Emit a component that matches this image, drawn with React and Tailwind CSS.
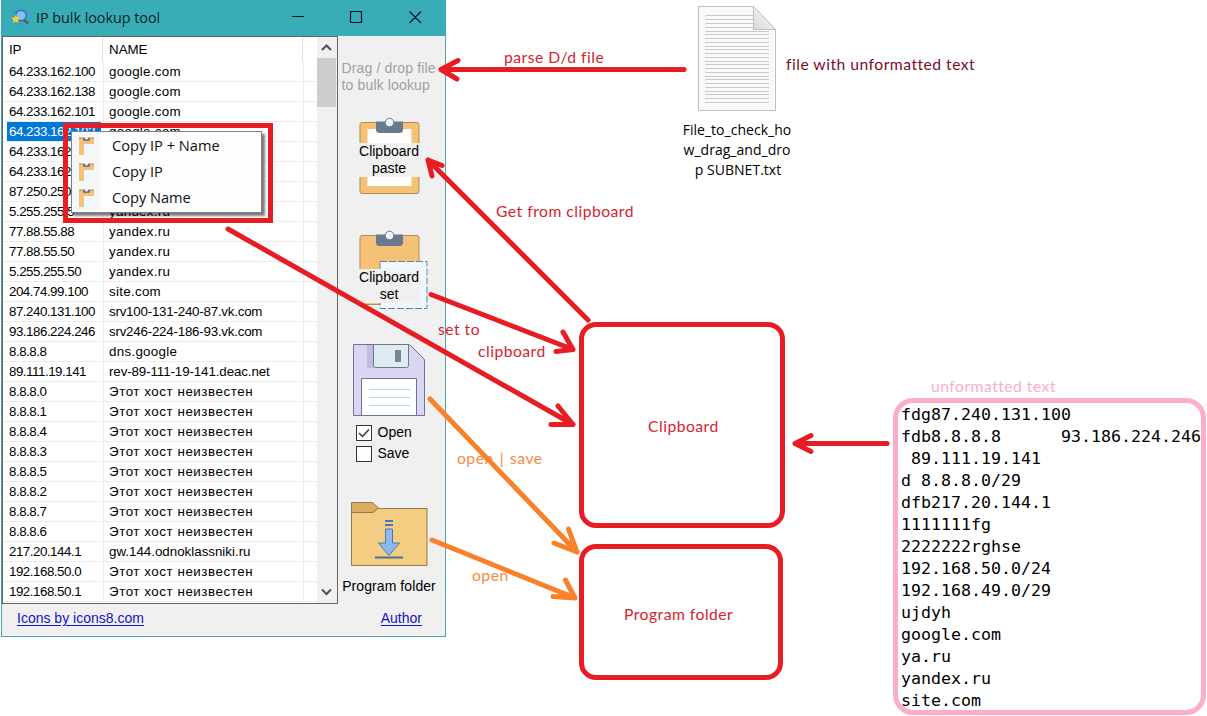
const rows = [
  ["64.233.162.100", "google.com"],
  ["64.233.162.138", "google.com"],
  ["64.233.162.101", "google.com"],
  ["64.233.162.102", "google.com"],
  ["64.233.162.139", "google.com"],
  ["64.233.162.113", "google.com"],
  ["87.250.250.242", "ya.ru"],
  ["5.255.255.5", "yandex.ru"],
  ["77.88.55.88", "yandex.ru"],
  ["77.88.55.50", "yandex.ru"],
  ["5.255.255.50", "yandex.ru"],
  ["204.74.99.100", "site.com"],
  ["87.240.131.100", "srv100-131-240-87.vk.com", "tracking-[-0.22px]"],
  ["93.186.224.246", "srv246-224-186-93.vk.com", "tracking-[-0.22px]"],
  ["8.8.8.8", "dns.google"],
  ["89.111.19.141", "rev-89-111-19-141.deac.net", "tracking-[-0.1px]"],
  ["8.8.8.0", "Этот хост неизвестен", "tracking-[0.56px]"],
  ["8.8.8.1", "Этот хост неизвестен", "tracking-[0.56px]"],
  ["8.8.8.4", "Этот хост неизвестен", "tracking-[0.56px]"],
  ["8.8.8.3", "Этот хост неизвестен", "tracking-[0.56px]"],
  ["8.8.8.5", "Этот хост неизвестен", "tracking-[0.56px]"],
  ["8.8.8.2", "Этот хост неизвестен", "tracking-[0.56px]"],
  ["8.8.8.7", "Этот хост неизвестен", "tracking-[0.56px]"],
  ["8.8.8.6", "Этот хост неизвестен", "tracking-[0.56px]"],
  ["217.20.144.1", "gw.144.odnoklassniki.ru", "tracking-[0px]"],
  ["192.168.50.0", "Этот хост неизвестен", "tracking-[0.56px]"],
  ["192.168.50.1", "Этот хост неизвестен", "tracking-[0.56px]"],
];

const sample = `fdg87.240.131.100
fdb8.8.8.8      93.186.224.246
 89.111.19.141
d 8.8.8.0/29
dfb217.20.144.1
1111111fg
2222222rghse
192.168.50.0/24
192.168.49.0/29
ujdyh
google.com
ya.ru
yandex.ru
site.com`;

function TitleBar() {
  return (
    <div className="flex h-9 items-center bg-[#38adb5] pl-[9px] font-['Open_Sans',sans-serif] text-[14.4px] text-[#0b1f22]">
      <svg width="20" height="20" viewBox="0 0 20 20">
        <circle cx="10.500" cy="9" r="9.400" fill="#3aa2c8" />
        <path d="M14 12l3.500 3" stroke="#4a5a64" strokeWidth="2.200" strokeLinecap="round" />
        <circle cx="11" cy="7.500" r="5.200" fill="#7cc0ff" stroke="#45687c" strokeWidth="1.200" />
        <path d="M5.800 6.500l1.400 2.900 3.200.3-2.400 2.200.7 3.200-2.900-1.600-2.900 1.600.6-3.200-2.300-2.200 3.200-.3z" fill="#ffcf2e" />
      </svg>
      <span className="ml-[6px] tracking-[-0.04px]">IP bulk lookup tool</span>
      <svg className="-mt-0.5 ml-auto mr-[23px]" width="132" height="14" viewBox="0 0 132 14" fill="none" stroke="#0b1a1c" strokeWidth="1.200">
        <path d="M1 6.500h12M59.500 1.500h11v11h-11zM118.500 1.500l11.500 11.500M130 1.500L118.500 13" />
      </svg>
    </div>
  );
}

function HostTable() {
  return (
    <div className="flex h-[568px] w-[336px] border border-[#646464] bg-white text-[13.33px] text-black">
      <div className="w-[314px] overflow-hidden">
        <div className="flex h-[25px] items-center leading-none">
          <div className="flex h-full w-[100px] items-center border-r border-[#e0e0e0] pl-[6px] tracking-[-0.3px]">IP</div>
          <div className="flex h-full w-[200px] items-center border-r border-[#e0e0e0] pl-[6px]">NAME</div>
        </div>
        {rows.map(([ip, name, tracking], i) => (
          <div key={i} className="flex h-5 border-b border-[#ececec]">
            <div className="flex w-[101px] items-center border-r border-[#ececec] pl-1">
              <span className={"flex h-[19px] w-[94px] items-center pl-[2px] tracking-[-0.48px] " + (i === 3 ? "bg-[#0078d7] text-white" : "")}>{ip}</span>
            </div>
            <div className={"flex w-[200px] items-center whitespace-nowrap border-r border-[#ececec] pl-[5px] " + (tracking || "tracking-[0.3px]")}>{name}</div>
          </div>
        ))}
      </div>
      <div className="flex flex-1 flex-col items-center bg-[#f0f0f0]">
        <svg className="h-[21px] w-5" viewBox="0 0 20 21" fill="none" stroke="#505050" strokeWidth="2"><path d="M5 13l4.500-4.500L14 13" /></svg>
        <div className="mr-px h-[49px] w-[19px] bg-[#cdcdcd]" />
        <svg className="mt-auto h-[22px] w-5" viewBox="0 0 20 22" fill="none" stroke="#505050" strokeWidth="2"><path d="M5 8.500L9.500 13 14 8.500" /></svg>
      </div>
    </div>
  );
}

function Clip() {
  return (
    <>
      <path d="M17 4.500h27v8q0 3.500-3.500 3.500h-20Q17 16 17 12.500z" fill="#66798f" />
      <circle cx="30.500" cy="5.500" r="4.300" fill="#eef3f8" stroke="#66798f" />
    </>
  );
}

function SidePanel() {
  return (
    <div className="flex flex-1 flex-col items-center pr-[5px] text-[14px] leading-[17px] text-black">
      <div className="mt-6 w-[95px] whitespace-nowrap tracking-[0.15px] text-[#a0a0a0]">Drag / drop file<br />to bulk lookup</div>

      <div className="relative mt-[23px] h-[78px] w-[61px]">
        <svg width="61" height="78" viewBox="0 0 61 78">
          <rect x="1" y="5.500" width="59" height="71" rx="2" fill="#f5c175" stroke="#b08d58" />
          <rect x="8.500" y="12" width="44" height="57" fill="#fff" />
          <Clip />
        </svg>
        <div className="absolute left-0 top-[26px] flex w-[61px] flex-col items-center bg-[#f0f0f0]">Clipboard<span>paste</span></div>
      </div>

      <div className="relative mt-[35px] h-[78px] w-[61px]">
        <svg className="overflow-visible" width="61" height="78" viewBox="0 0 61 78">
          <rect x="1" y="5.500" width="59" height="69" rx="2" fill="#f5c175" stroke="#b08d58" />
          <rect x="21" y="31.500" width="47" height="47" fill="#eff8ff" stroke="#65809a" strokeDasharray="7 2" />
          <Clip />
        </svg>
        <div className="absolute left-0 top-[39px] flex w-[61px] flex-col items-center bg-[#f0f0f0]">Clipboard<span>set</span></div>
      </div>

      <svg className="mt-9" width="73" height="73" viewBox="0 0 73 73">
        <path d="M.5.5h56l15 15v56H.5z" fill="#dcd5f2" stroke="#766c9c" />
        <path d="M14 1h7v23h-7z" fill="#c5b9e4" />
        <path d="M20.500.5h35v21q0 2-2 2h-31q-2 0-2-2z" fill="#dfebf1" stroke="#66798f" />
        <path d="M42 6h6v12h-6z" fill="#748896" />
        <path d="M8.500 34.500h55v37h-55z" fill="#fff" stroke="#66798f" />
        <path d="M16 45.500h41M16 53.500h41M16 61.500h41" stroke="#b5d9e8" />
      </svg>

      <div className="mt-[7px] flex w-[67px] flex-col gap-[4px] text-[14px]">
        {["Open", "Save"].map((label) => (
          <div key={label} className="flex items-center gap-[6px]">
            <svg width="16" height="16" viewBox="0 0 16 16" fill="#fff" stroke="#333">
              <rect x=".5" y=".5" width="15" height="15" />
              {label === "Open" && <path d="M3 8l3.500 3.500L13 4.500" fill="none" strokeWidth="1.400" />}
            </svg>
            <span>{label}</span>
          </div>
        ))}
      </div>

      <svg className="mt-10" width="77" height="66" viewBox="0 0 77 66">
        <path d="M.5 6.500h75.500v57H.5z" fill="#f3cd82" stroke="#967a4b" />
        <path d="M.5.500h21l6 5.500-5.500 4.500H.5z" fill="#d9ad62" stroke="#967a4b" />
        <path d="M34 19h8M34 23h8" stroke="#4b78ad" strokeWidth="1.800" />
        <path d="M34.500 27h7v14h7L38 53.500 27.500 41h7z" fill="#8bb9f5" stroke="#4b78ad" />
        <path d="M24 55.500h28" stroke="#4b6f96" strokeWidth="2" />
      </svg>
      <div className="mt-[10px] whitespace-nowrap tracking-[0.08px]">Program folder</div>
    </div>
  );
}

function LookupWindow() {
  return (
    <div className="ml-px flex h-[637px] w-[445px] flex-col border border-t-0 border-[#4ba6ab] bg-[#f0f0f0] font-['Liberation_Sans',sans-serif]">
      <div className="-mx-px"><TitleBar /></div>
      <div className="flex h-[568px]"><HostTable /><SidePanel /></div>
      <div className="flex flex-1 items-center justify-between pb-[3px] pl-[15px] pr-[23px] text-[14px] leading-none text-[#1414c8]">
        <a className="pb-px underline underline-offset-2">Icons by icons8.com</a>
        <a className="pb-px underline underline-offset-2">Author</a>
      </div>
    </div>
  );
}

function ContextMenu() {
  return (
    <div className="absolute left-[63px] top-[123px] h-[100px] w-[210px] border-[5px] border-[#e81c23] p-[3px]">
      <div className="flex h-[82px] w-[191px] flex-col border border-[#808080] bg-[#fdfdfd] py-px shadow-[3px_3px_2px_rgba(0,0,0,0.5)]">
        {["Copy IP + Name", "Copy IP", "Copy Name"].map((label) => (
          <div key={label} className="flex h-[26px] items-center font-['Open_Sans',sans-serif] text-[14.600px] leading-5 text-[#111]">
            <div className="flex h-full w-[28px] items-center bg-[#f7f7f7] pl-[7px]">
              <svg width="16" height="19" viewBox="0 0 16 19">
                <path d="M0 1h15v17H0z" fill="#f0f7fd" />
                <path d="M0 1h15v6H5v11H0z" fill="#f5c175" />
                <path d="M0 1h15" stroke="#b08d58" />
                <path d="M4 1h7v2l-1 1H5L4 3z" fill="#66798f" />
                <circle cx="7.500" cy="1.300" r="1.200" fill="#fff" />
              </svg>
            </div>
            <span className="pb-0.5 pl-3">{label}</span>
          </div>
        ))}
      </div>
    </div>
  );
}

function TextFile() {
  return (
    <div className="absolute left-[677px] top-[5px] flex w-[120px] flex-col items-center font-['Open_Sans',sans-serif] text-[14px] leading-5 text-black">
      <svg width="80" height="108" viewBox="0 0 80 108">
        <defs>
          <linearGradient id="fold" x1="0" y1="1" x2="1" y2="0"><stop stopColor="#d8d8d8" /><stop offset="1" stopColor="#fff" /></linearGradient>
        </defs>
        <path d="M1.500 1.500h55l22 23v81h-77z" fill="#f8f9fa" stroke="#bfbfbf" />
        <path d="M8 10.500h48M8 14.500h48M8 18.500h48M8 22.500h48" stroke="#c8c9cb" />
        <path d="M8 26.500h64M8 29.500h64M8 33.500h64M8 37.500h64M8 41.500h64M8 44.500h64M8 48.500h64M8 52.500h64M8 56.500h64M8 59.500h64M8 63.500h64M8 67.500h64M8 71.500h64M8 74.500h64M8 78.500h64M8 82.500h64M8 86.500h64M8 89.500h64M8 93.500h64M8 97.500h64" stroke="#c8c9cb" />
        <path d="M56.500 1.500v23h22z" fill="url(#fold)" stroke="#bfbfbf" />
      </svg>
      <div className="mt-[7px] text-center tracking-[0.03px]">File_to_check_ho<br />w_drag_and_dro<br /><span className="pl-0.5">p SUBNET.txt</span></div>
    </div>
  );
}

function Arrows() {
  return (
    <svg className="pointer-events-none absolute left-0 top-0" width="1207" height="716" viewBox="0 0 1207 716" fill="none" strokeWidth="5" strokeLinecap="round" strokeLinejoin="round">
      <g stroke="#e81c23">
        <path d="M684 69.500H441M458 60.500L441 69.500l16 9.500M447 67v5" />
        <path d="M588 320L428 160M442 165.500L428 160l4 16M434 163l-3 4" />
        <path d="M431 294.500L573 349.500M563 332l10 17.500-17 2M569 346l-2 3" />
        <path d="M228 229L573 424.500M558 406l15 18.500h-22M568 420l-2 3" />
        <path d="M887 443.500H795M811 435.500l-16 8 16 8M801 442v3" />
      </g>
      <g stroke="#fa8128">
        <path d="M430 399L577 552M568.500 529l8.500 23-23-9M573 546l-3 2" />
        <path d="M432 540L575 598M565.500 580l9.500 18-22-1.500M571 594l-2 3" />
      </g>
    </svg>
  );
}

function Note({ className, children }) {
  return <div className={"absolute whitespace-nowrap font-['Lato',sans-serif] text-[15.700px] leading-5 tracking-[0.48px] " + className}>{children}</div>;
}

export default function App() {
  return (
    <main className="relative h-[716px] w-[1207px] overflow-hidden bg-white">
      <LookupWindow />
      <ContextMenu />
      <TextFile />
      <div className="absolute left-[579px] top-[322px] h-[206px] w-[206px] rounded-[17px] border-[5px] border-[#e81c23]" />
      <div className="absolute left-[579px] top-[544px] h-[136px] w-[204px] rounded-[17px] border-[5px] border-[#e81c23]" />
      <div className="absolute left-[893px] top-[398px] h-[317px] w-[313px] rounded-[20px] border-[5px] border-[#fbaec8]">
        <pre className="pl-[3px] pt-px font-['DejaVu_Sans_Mono',monospace] text-[16.610px] leading-[22px] text-black">{sample}</pre>
      </div>
      <Note className="left-[504px] top-[47px] text-[#d4232e]">parse D/d file</Note>
      <Note className="left-[786px] top-[54px] text-[#7d0c1d]">file with unformatted text</Note>
      <Note className="left-[496px] top-[201px] text-[#d4232e]">Get from clipboard</Note>
      <Note className="left-[438px] top-[319px] text-[#d4232e]">set to</Note>
      <Note className="left-[478px] top-[341px] text-[#d4232e]">clipboard</Note>
      <Note className="left-[648px] top-[416px] text-[#d4232e]">Clipboard</Note>
      <Note className="left-[624px] top-[604px] text-[#d4232e]">Program folder</Note>
      <Note className="left-[457px] top-[448px] text-[#f58a42] [word-spacing:1.5px]">open | save</Note>
      <Note className="left-[472px] top-[565px] text-[#f58a42]">open</Note>
      <Note className="left-[931px] top-[376px] text-[#fbaec8]">unformatted text</Note>
      <Arrows />
    </main>
  );
}
